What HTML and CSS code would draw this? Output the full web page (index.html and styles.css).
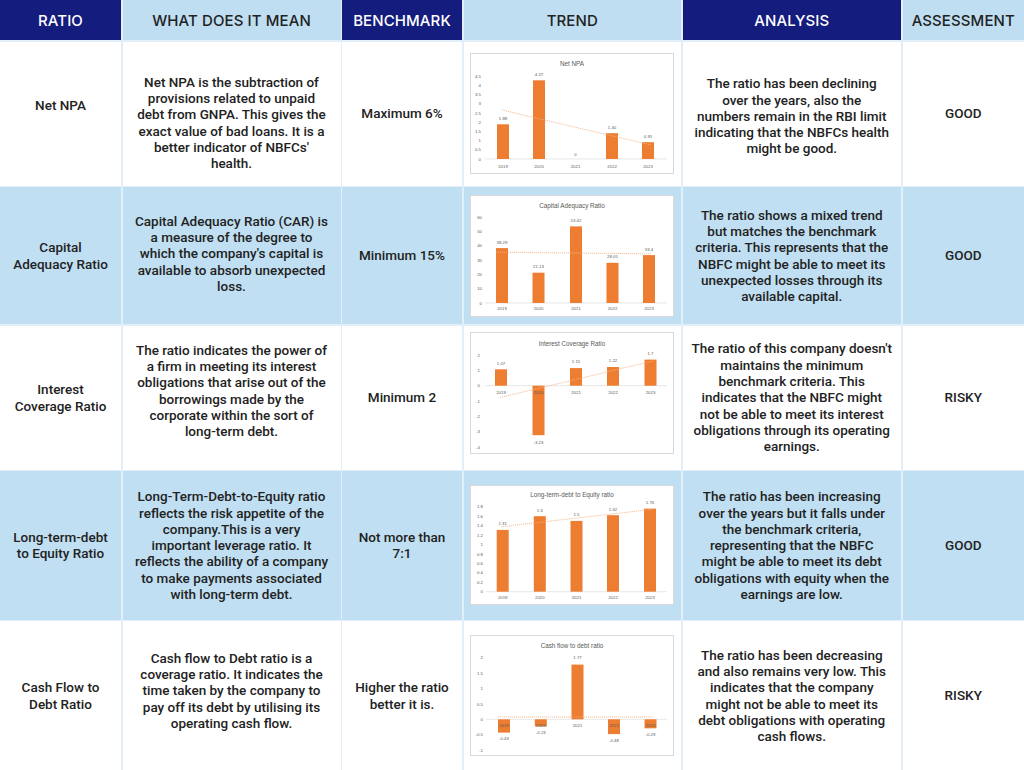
FILE: index.html
```html
<!DOCTYPE html>
<html lang="en">
<head>
<meta charset="utf-8">
<title>NBFC Ratio Analysis</title>
<link rel="stylesheet" href="styles.css">
</head>
<body>
<div class="table">
  <div class="row head">
    <div class="cell h-dark">RATIO</div>
    <div class="cell h-light">WHAT DOES IT MEAN</div>
    <div class="cell h-dark">BENCHMARK</div>
    <div class="cell h-light">TREND</div>
    <div class="cell h-dark">ANALYSIS</div>
    <div class="cell h-light">ASSESSMENT</div>
  </div>

  <div class="row r1 white">
    <div class="cell">Net NPA<br>&nbsp;</div>
    <div class="cell cell--lower">Net NPA is the subtraction of<br>provisions related to unpaid<br>debt from GNPA. This gives the<br>exact value of bad loans. It is a<br>better indicator of NBFCs'<br>health.</div>
    <div class="cell">Maximum 6%</div>
    <div class="cell trend">
      <div class="chart-box">
        <svg class="chart" viewBox="0 0 202 119" width="202" height="119">
          <text class="ct" x="101" y="12.3">Net NPA</text>
          <g class="yl">
            <text x="10" y="106.6">0</text><text x="10" y="97.4">0.5</text><text x="10" y="88.2">1</text><text x="10" y="78.9">1.5</text><text x="10" y="69.7">2</text><text x="10" y="60.5">2.5</text><text x="10" y="51.3">3</text><text x="10" y="42.1">3.5</text><text x="10" y="32.8">4</text><text x="10" y="23.6">4.5</text>
          </g>
          <line class="axis" x1="14" y1="105" x2="196" y2="105"/>
          <rect class="bar" x="26" y="70.3" width="12" height="34.7"/>
          <rect class="bar" x="62" y="26.3" width="12" height="78.7"/>
          <rect class="bar" x="135" y="79.2" width="12" height="25.8"/>
          <rect class="bar" x="171" y="88.2" width="12" height="16.8"/>
          <line class="trendline" x1="31" y1="56" x2="180" y2="91"/>
          <g class="dl">
            <text x="32" y="66.3">1.88</text><text x="68" y="22.3">4.27</text><text x="104.5" y="101.6">0</text><text x="141" y="75.2">1.40</text><text x="177" y="84.2">0.91</text>
          </g>
          <g class="xl">
            <text x="32" y="113.8">2019</text><text x="68" y="113.8">2020</text><text x="104.5" y="113.8">2021</text><text x="141" y="113.8">2022</text><text x="177" y="113.8">2023</text>
          </g>
        </svg>
      </div>
    </div>
    <div class="cell cell--lower-s">The ratio has been declining<br>over the years, also the<br>numbers remain in the RBI limit<br>indicating that the NBFCs health<br>might be good.</div>
    <div class="cell">GOOD</div>
  </div>

  <div class="row r2 blue">
    <div class="cell">Capital<br>Adequacy Ratio</div>
    <div class="cell cell--raise-s">Capital Adequacy Ratio (CAR) is<br>a measure of the degree to<br>which the company's capital is<br>available to absorb unexpected<br>loss.</div>
    <div class="cell">Minimum 15%</div>
    <div class="cell trend">
      <div class="chart-box">
        <svg class="chart" viewBox="0 0 202 120" width="202" height="120">
          <text class="ct" x="101" y="12">Capital Adequacy Ratio</text>
          <g class="yl">
            <text x="11" y="108.6">0</text><text x="11" y="94.3">10</text><text x="11" y="79.9">20</text><text x="11" y="65.6">30</text><text x="11" y="51.3">40</text><text x="11" y="36.9">50</text><text x="11" y="22.6">60</text>
          </g>
          <line class="axis" x1="14" y1="107" x2="196" y2="107"/>
          <rect class="bar" x="25" y="52.1" width="12" height="54.9"/>
          <rect class="bar" x="61.5" y="76.7" width="12" height="30.3"/>
          <rect class="bar" x="99" y="30.4" width="12" height="76.6"/>
          <rect class="bar" x="135.5" y="66.8" width="12" height="40.2"/>
          <rect class="bar" x="172" y="59.1" width="12" height="47.9"/>
          <line class="trendline" x1="25" y1="56.2" x2="180" y2="57.9"/>
          <g class="dl">
            <text x="31" y="47.6">38.29</text><text x="67.5" y="72.2">21.13</text><text x="105" y="25.9">53.42</text><text x="141.5" y="62.3">28.05</text><text x="178" y="54.6">33.4</text>
          </g>
          <g class="xl">
            <text x="31" y="114">2019</text><text x="67.5" y="114">2020</text><text x="105" y="114">2021</text><text x="141.5" y="114">2022</text><text x="178" y="114">2023</text>
          </g>
        </svg>
      </div>
    </div>
    <div class="cell">The ratio shows a mixed trend<br>but matches the benchmark<br>criteria. This represents that the<br>NBFC might be able to meet its<br>unexpected losses through its<br>available capital.</div>
    <div class="cell">GOOD</div>
  </div>

  <div class="row r3 white">
    <div class="cell">Interest<br>Coverage Ratio</div>
    <div class="cell cell--raise-l">The ratio indicates the power of<br>a firm in meeting its interest<br>obligations that arise out of the<br>borrowings made by the<br>corporate within the sort of<br>long-term debt.</div>
    <div class="cell">Minimum 2</div>
    <div class="cell trend">
      <div class="chart-box chart-box--top">
        <svg class="chart" viewBox="0 0 202 120" width="202" height="120">
          <text class="ct" x="101" y="12.5">Interest Coverage Ratio</text>
          <g class="yl">
            <text x="9" y="23.6">2</text><text x="9" y="39">1</text><text x="9" y="54.3">0</text><text x="9" y="69.6">-1</text><text x="9" y="85">-2</text><text x="9" y="100.3">-3</text><text x="9" y="115.6">-4</text>
          </g>
          <line class="axis" x1="14" y1="52.7" x2="196" y2="52.7"/>
          <rect class="bar" x="24" y="36.3" width="12" height="16.4"/>
          <rect class="bar" x="61.5" y="52.7" width="12" height="49.5"/>
          <rect class="bar" x="99" y="35.1" width="12" height="17.6"/>
          <rect class="bar" x="136" y="34" width="12" height="18.7"/>
          <rect class="bar" x="173.5" y="26.6" width="12" height="26.1"/>
          <line class="trendline" x1="29" y1="64.5" x2="182" y2="28"/>
          <g class="dl">
            <text x="30" y="31.5">1.07</text><text x="67.5" y="110.5">-3.23</text><text x="105" y="30.3">1.15</text><text x="142" y="29.2">1.22</text><text x="179.5" y="21.8">1.7</text>
          </g>
          <g class="xl">
            <text x="30" y="61.2">2019</text><text x="67.5" y="61.2">2020</text><text x="105" y="61.2">2021</text><text x="142" y="61.2">2022</text><text x="179.5" y="61.2">2023</text>
          </g>
        </svg>
      </div>
    </div>
    <div class="cell">The ratio of this company doesn't<br>maintains the minimum<br>benchmark criteria. This<br>indicates that the NBFC might<br>not be able to meet its interest<br>obligations through its operating<br>earnings.</div>
    <div class="cell">RISKY</div>
  </div>

  <div class="row r4 blue">
    <div class="cell">Long-term-debt<br>to Equity Ratio</div>
    <div class="cell">Long-Term-Debt-to-Equity ratio<br>reflects the risk appetite of the<br>company.This is a very<br>important leverage ratio. It<br>reflects the ability of a company<br>to make payments associated<br>with long-term debt.</div>
    <div class="cell">Not more than<br>7:1</div>
    <div class="cell trend">
      <div class="chart-box">
        <svg class="chart" viewBox="0 0 202 118" width="202" height="118">
          <text class="ct" x="101" y="11.2">Long-term-debt to Equity ratio</text>
          <g class="yl">
            <text x="12" y="107.3">0</text><text x="12" y="97.9">0.2</text><text x="12" y="88.4">0.4</text><text x="12" y="79">0.6</text><text x="12" y="69.5">0.8</text><text x="12" y="60.1">1</text><text x="12" y="50.7">1.2</text><text x="12" y="41.2">1.4</text><text x="12" y="31.8">1.6</text><text x="12" y="22.3">1.8</text>
          </g>
          <line class="axis" x1="15" y1="105.7" x2="196" y2="105.7"/>
          <rect class="bar" x="25.7" y="43.9" width="12" height="61.8"/>
          <rect class="bar" x="62.8" y="30.2" width="12" height="75.5"/>
          <rect class="bar" x="99.5" y="34.9" width="12" height="70.8"/>
          <rect class="bar" x="136" y="29.2" width="12" height="76.5"/>
          <rect class="bar" x="173" y="22.6" width="12" height="83.1"/>
          <line class="trendline" x1="30" y1="40.8" x2="182" y2="23.2"/>
          <g class="dl">
            <text x="31.7" y="39.4">1.31</text><text x="68.8" y="25.7">1.6</text><text x="105.5" y="30.4">1.5</text><text x="142" y="24.7">1.62</text><text x="179" y="18.1">1.76</text>
          </g>
          <g class="xl">
            <text x="31.7" y="113.3">2019</text><text x="68.8" y="113.3">2020</text><text x="105.5" y="113.3">2021</text><text x="142" y="113.3">2022</text><text x="179" y="113.3">2023</text>
          </g>
        </svg>
      </div>
    </div>
    <div class="cell">The ratio has been increasing<br>over the years but it falls under<br>the benchmark criteria,<br>representing that the NBFC<br>might be able to meet its debt<br>obligations with equity when the<br>earnings are low.</div>
    <div class="cell">GOOD</div>
  </div>

  <div class="row r5 white">
    <div class="cell">Cash Flow to<br>Debt Ratio</div>
    <div class="cell cell--raise">Cash flow to Debt ratio is a<br>coverage ratio. It indicates the<br>time taken by the company to<br>pay off its debt by utilising its<br>operating cash flow.</div>
    <div class="cell">Higher the ratio<br>better it is.</div>
    <div class="cell trend">
      <div class="chart-box">
        <svg class="chart" viewBox="0 0 202 119" width="202" height="119">
          <text class="ct" x="101" y="11.5">Cash flow to debt ratio</text>
          <g class="yl">
            <text x="12" y="23.1">2</text><text x="12" y="38.6">1.5</text><text x="12" y="54">1</text><text x="12" y="69.5">0.5</text><text x="12" y="84.9">0</text><text x="12" y="100.4">-0.5</text><text x="12" y="115.8">-1</text>
          </g>
          <line class="axis" x1="15" y1="83.3" x2="196" y2="83.3"/>
          <rect class="bar" x="27" y="83.3" width="12" height="13.3"/>
          <rect class="bar" x="63.8" y="83.3" width="12" height="7.1"/>
          <rect class="bar" x="100.5" y="28.6" width="12" height="54.7"/>
          <rect class="bar" x="137" y="83.3" width="12" height="14.8"/>
          <rect class="bar" x="173.5" y="83.3" width="12" height="9"/>
          <line class="trendline" x1="27" y1="81" x2="182" y2="81"/>
          <g class="dl">
            <text x="33" y="104.3">-0.43</text><text x="69.8" y="98.2">-0.23</text><text x="106.5" y="23.3">1.77</text><text x="143" y="106">-0.48</text><text x="179.5" y="100">-0.29</text>
          </g>
          <g class="xl">
            <text x="33" y="91">2019</text><text x="69.8" y="91">2020</text><text x="106.5" y="91">2021</text><text x="143" y="91">2022</text><text x="179.5" y="91">2023</text>
          </g>
        </svg>
      </div>
    </div>
    <div class="cell">The ratio has been decreasing<br>and also remains very low. This<br>indicates that the company<br>might not be able to meet its<br>debt obligations with operating<br>cash flows.</div>
    <div class="cell">RISKY</div>
  </div>
</div>
</body>
</html>
```

FILE: styles.css
```css
html, body {
  margin: 0;
  padding: 0;
  background: #ffffff;
}

.table {
  width: 1024px;
  height: 770px;
  display: flex;
  flex-direction: column;
  gap: 1.5px;
  background: #e2eff9;
  overflow: hidden;
}

.row {
  display: grid;
  grid-template-columns: 121px 218px 120px 217.5px 218.5px 1fr;
  gap: 1.5px;
}

.head { height: 40px; }
.r1 { height: 144px; }
.r2 { height: 137px; }
.r3 { height: 144px; }
.r4 { height: 148.5px; }
.r5 { height: 149px; }

.cell {
  display: flex;
  align-items: center;
  justify-content: center;
  text-align: center;
  padding: 0 4px;
  font-family: Roboto, "Liberation Sans", sans-serif;
  font-weight: 500;
  font-size: 13.5px;
  line-height: 16.3px;
  color: #222222;
  white-space: nowrap;
}

.white .cell { background: #ffffff; }
.blue .cell { background: #c0dff2; }

.head .cell {
  font-family: Inter, "Open Sans", sans-serif;
  font-weight: 500;
  font-size: 15px;
  letter-spacing: 0.1px;
  padding-top: 3px;
}

.h-dark {
  background: #141c7e;
  color: #ffffff !important;
}

.h-light {
  background: #bfdef2;
  color: #222222;
}

.cell--raise { padding-bottom: 10px; }
.cell--raise-s { padding-bottom: 4px; }
.cell--raise-l { padding-bottom: 14px; }
.cell--lower { padding-top: 18px; }
.cell--lower-s { padding-top: 5px; }

.trend { padding: 0; }

.chart-box {
  background: #ffffff;
  border: 1px solid #d9d9d9;
  display: flex;
}

.chart-box--top {
  align-self: flex-start;
  margin-top: 6px;
}

.chart { display: block; }

.chart text {
  font-family: "Liberation Sans", Arial, sans-serif;
  fill: #595959;
}

.ct {
  font-size: 6.3px;
  text-anchor: middle;
}

.yl text {
  font-size: 4.3px;
  text-anchor: end;
}

.dl text,
.xl text {
  font-size: 4.3px;
  text-anchor: middle;
}

.bar { fill: #ed7d31; }

.axis {
  stroke: #d9d9d9;
  stroke-width: 0.6;
}

.trendline {
  stroke: #f4b183;
  stroke-width: 0.8;
  stroke-dasharray: 1.2 0.8;
}
```
